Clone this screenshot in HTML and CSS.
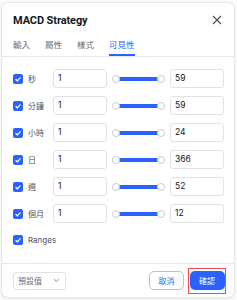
FILE: index.html
```html
<!DOCTYPE html>
<html lang="zh-Hant">
<head>
<meta charset="utf-8">
<link rel="stylesheet" href="styles.css">
</head>
<body>
<div class="dialog">
  <div class="header">
    <div class="title">MACD Strategy</div>
    <svg class="close" width="10" height="10" viewBox="0 0 10 10"><path d="M1 1L9 9M9 1L1 9" stroke="#50535e" stroke-width="1.2" fill="none"/></svg>
  </div>
  <div class="tabs">
    <div class="tab">輸入</div>
    <div class="tab">屬性</div>
    <div class="tab">樣式</div>
    <div class="tab active">可見性</div>
  </div>
  <div class="body">
    <div class="row">
      <label class="check"><span class="box"><svg viewBox="0 0 10 10"><path d="M2.6 5.2L4.3 6.8L7.5 3.4" stroke="#fff" stroke-width="1.2" fill="none"/></svg></span><span class="lbl">秒</span></label>
      <div class="input">1</div>
      <div class="slider"><span class="knob"></span><span class="track"></span><span class="knob"></span></div>
      <div class="input">59</div>
    </div>
    <div class="row">
      <label class="check"><span class="box"><svg viewBox="0 0 10 10"><path d="M2.6 5.2L4.3 6.8L7.5 3.4" stroke="#fff" stroke-width="1.2" fill="none"/></svg></span><span class="lbl">分鐘</span></label>
      <div class="input">1</div>
      <div class="slider"><span class="knob"></span><span class="track"></span><span class="knob"></span></div>
      <div class="input">59</div>
    </div>
    <div class="row">
      <label class="check"><span class="box"><svg viewBox="0 0 10 10"><path d="M2.6 5.2L4.3 6.8L7.5 3.4" stroke="#fff" stroke-width="1.2" fill="none"/></svg></span><span class="lbl">小時</span></label>
      <div class="input">1</div>
      <div class="slider"><span class="knob"></span><span class="track"></span><span class="knob"></span></div>
      <div class="input">24</div>
    </div>
    <div class="row">
      <label class="check"><span class="box"><svg viewBox="0 0 10 10"><path d="M2.6 5.2L4.3 6.8L7.5 3.4" stroke="#fff" stroke-width="1.2" fill="none"/></svg></span><span class="lbl">日</span></label>
      <div class="input">1</div>
      <div class="slider"><span class="knob"></span><span class="track"></span><span class="knob"></span></div>
      <div class="input">366</div>
    </div>
    <div class="row">
      <label class="check"><span class="box"><svg viewBox="0 0 10 10"><path d="M2.6 5.2L4.3 6.8L7.5 3.4" stroke="#fff" stroke-width="1.2" fill="none"/></svg></span><span class="lbl">週</span></label>
      <div class="input">1</div>
      <div class="slider"><span class="knob"></span><span class="track"></span><span class="knob"></span></div>
      <div class="input">52</div>
    </div>
    <div class="row">
      <label class="check"><span class="box"><svg viewBox="0 0 10 10"><path d="M2.6 5.2L4.3 6.8L7.5 3.4" stroke="#fff" stroke-width="1.2" fill="none"/></svg></span><span class="lbl">個月</span></label>
      <div class="input">1</div>
      <div class="slider"><span class="knob"></span><span class="track"></span><span class="knob"></span></div>
      <div class="input">12</div>
    </div>
    <div class="row single">
      <label class="check"><span class="box"><svg viewBox="0 0 10 10"><path d="M2.6 5.2L4.3 6.8L7.5 3.4" stroke="#fff" stroke-width="1.2" fill="none"/></svg></span><span class="lbl">Ranges</span></label>
    </div>
  </div>
  <div class="footer">
    <div class="select"><span>預設值</span><svg width="7" height="5" viewBox="0 0 7 5"><path d="M1 1.2L3.5 3.6L6 1.2" stroke="#787b86" stroke-width="0.9" fill="none"/></svg></div>
    <div class="buttons">
      <div class="btn cancel">取消</div>
      <div class="highlight"><div class="btn ok">確認</div></div>
    </div>
  </div>
</div>
</body>
</html>
```

FILE: styles.css
```css
* { box-sizing: border-box; }
html, body { margin: 0; padding: 0; }
body {
  width: 237px;
  height: 300px;
  background: #fbfbfc;
  font-family: Inter, "Noto Sans CJK TC", sans-serif;
  color: #131722;
  overflow: hidden;
  padding: 3px 3px 0 2px;
}
.dialog {
  width: 232px;
  height: 294px;
  background: #fff;
  border-radius: 6px;
  box-shadow: 0 0 0 1px #e6e8ee, 0 1px 4px rgba(0,0,0,0.12);
  display: flex;
  flex-direction: column;
}
.header {
  height: 32px;
  display: flex;
  align-items: center;
  justify-content: space-between;
  padding: 2px 12px 0 11px;
}
.title {
  font-family: Roboto, "Noto Sans", sans-serif;
  font-weight: 700;
  font-size: 11px;
  letter-spacing: -0.1px;
}
.close { display: block; }
.tabs {
  height: 22px;
  display: flex;
  gap: 15px;
  padding-left: 11px;
  border-bottom: 1px solid #e6e8ee;
}
.tab {
  font-family: "Noto Sans CJK TC", sans-serif;
  font-size: 8.5px;
  color: #6a6d78;
  line-height: 19px;
  border-bottom: 2px solid transparent;
}
.tab.active {
  color: #2962ff;
  border-bottom-color: #2962ff;
}
.body {
  flex: 1;
  padding: 12px 10px 0 11px;
  display: flex;
  flex-direction: column;
  gap: 8px;
}
.row {
  display: grid;
  grid-template-columns: 35px 54px 53px 54px;
  column-gap: 5px;
  height: 19px;
  align-items: center;
}
.row.single { height: 17px; }
.check {
  display: flex;
  align-items: center;
  gap: 5px;
}
.box {
  width: 10px;
  height: 10px;
  border-radius: 2px;
  background: #2962ff;
  display: flex;
}
.box svg { width: 10px; height: 10px; }
.lbl {
  font-family: "Noto Sans CJK TC", sans-serif;
  font-size: 8px;
  color: #50535e;
  white-space: nowrap;
}
.single .lbl { font-family: Inter, sans-serif; font-size: 8px; }
.input {
  height: 19px;
  border: 1px solid #e0e3eb;
  border-radius: 3px;
  font-size: 8.5px;
  line-height: 17px;
  padding-left: 4px;
  color: #131722;
}
.slider {
  display: flex;
  align-items: center;
  height: 19px;
}
.track {
  flex: 1;
  height: 4px;
  background: #2962ff;
  margin: 0 -1px;
}
.knob {
  width: 8px;
  height: 8px;
  border-radius: 50%;
  background: #fff;
  border: 1px solid #c9ccd4;
  position: relative;
  z-index: 1;
}
.footer {
  height: 34px;
  border-top: 1px solid #e6e8ee;
  display: flex;
  align-items: center;
  justify-content: space-between;
  padding: 0 8px 0 11px;
}
.select {
  width: 53px;
  height: 18px;
  border: 1px solid #e0e3eb;
  border-radius: 3px;
  display: flex;
  align-items: center;
  justify-content: space-between;
  padding: 0 5px 0 4px;
  font-family: "Noto Sans CJK TC", sans-serif;
  font-size: 8px;
  color: #6a6d78;
}
.buttons {
  display: flex;
  align-items: center;
  gap: 4px;
}
.btn {
  height: 19px;
  width: 35px;
  border-radius: 5px;
  font-family: "Noto Sans CJK TC", sans-serif;
  font-size: 8px;
  display: flex;
  align-items: center;
  justify-content: center;
}
.cancel {
  border: 1px solid #a9c0fd;
  color: #2962ff;
  background: #fff;
}
.highlight {
  border: 1.5px solid #f5474a;
  padding: 2.5px 0.5px;
}
.ok {
  background: #2962ff;
  color: #fff;
}
```
